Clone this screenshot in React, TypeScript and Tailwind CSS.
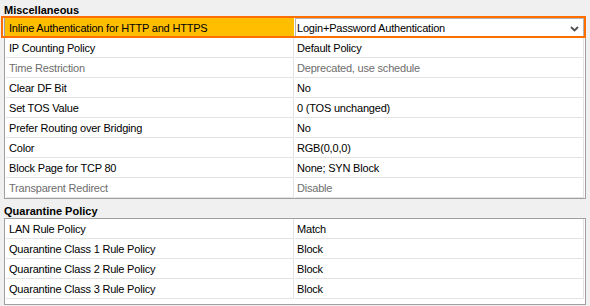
import React from "react";

type Row = { label: string; value: string; disabled?: boolean };

const misc: Row[] = [
    { label: "Inline Authentication for HTTP and HTTPS", value: "Login+Password Authentication" },
    { label: "IP Counting Policy", value: "Default Policy" },
    { label: "Time Restriction", value: "Deprecated, use schedule", disabled: true },
    { label: "Clear DF Bit", value: "No" },
    { label: "Set TOS Value", value: "0 (TOS unchanged)" },
    { label: "Prefer Routing over Bridging", value: "No" },
    { label: "Color", value: "RGB(0,0,0)" },
    { label: "Block Page for TCP 80", value: "None; SYN Block" },
    { label: "Transparent Redirect", value: "Disable", disabled: true },
];

const quarantine: Row[] = [
    { label: "LAN Rule Policy", value: "Match" },
    { label: "Quarantine Class 1 Rule Policy", value: "Block" },
    { label: "Quarantine Class 2 Rule Policy", value: "Block" },
    { label: "Quarantine Class 3 Rule Policy", value: "Block" },
];

function PlainRow({ row }: { row: Row }) {
    const tone = row.disabled ? "text-[#6d6d6d]" : "text-black";
    return (
        <div className="flex h-5">
            <div className={`w-[288px] flex items-center border-r border-b border-[#e3e3e3] pl-[3px] pt-px ${tone}`}>
                {row.label}
            </div>
            <div className={`ml-px flex-1 flex items-center border-r border-b border-[#e3e3e3] pl-[2px] pt-px ${tone}`}>
                {row.value}
            </div>
        </div>
    );
}

function SelectedRow({ row }: { row: Row }) {
    return (
        <div className="relative flex h-5">
            <div className="w-[289px] -ml-px flex items-center bg-[#ffbf00] pl-[4px] pt-px text-black">
                {row.label}
            </div>
            <div className="ml-px flex-1 flex items-center justify-between border border-[#b4b4b4] pl-[1px] pr-[4px] pt-px text-black">
                <span>{row.value}</span>
                <svg width="9" height="6" viewBox="0 0 9 6">
                    <path d="M1 1 L4.5 4.5 L8 1" fill="none" stroke="#505050" strokeWidth="1.8" />
                </svg>
            </div>
            {/* orange focus frame */}
            <div className="pointer-events-none absolute -left-[5px] -right-[2px] -top-[2px] bottom-0 border-2 border-[#ff6f00]" />
        </div>
    );
}

export default function App() {
    return (
        <div
            className="w-[590px] h-[306px] overflow-hidden bg-[#f0f0f0] text-[11px] tracking-[-0.2px]"
            style={{ fontFamily: '"Liberation Sans", Arial, sans-serif' }}
        >
            {/* Miscellaneous */}
            <div className="h-[17px] pt-[3px] pl-[4px] flex items-center font-bold text-black tracking-normal">
                Miscellaneous
            </div>
            <div className="ml-[4px] w-[582px] border border-[#a0a0a0] bg-white px-px">
                <SelectedRow row={misc[0]} />
                {misc.slice(1).map((row, i) => (
                    <PlainRow key={i} row={row} />
                ))}
            </div>

            {/* Quarantine Policy */}
            <div className="h-[19px] pt-[5px] pl-[4px] flex items-center font-bold text-black tracking-normal">
                Quarantine Policy
            </div>
            <div className="ml-[4px] w-[582px] border border-[#a0a0a0] bg-white px-px pb-[5px]">
                {quarantine.map((row, i) => (
                    <PlainRow key={i} row={row} />
                ))}
            </div>
        </div>
    );
}
